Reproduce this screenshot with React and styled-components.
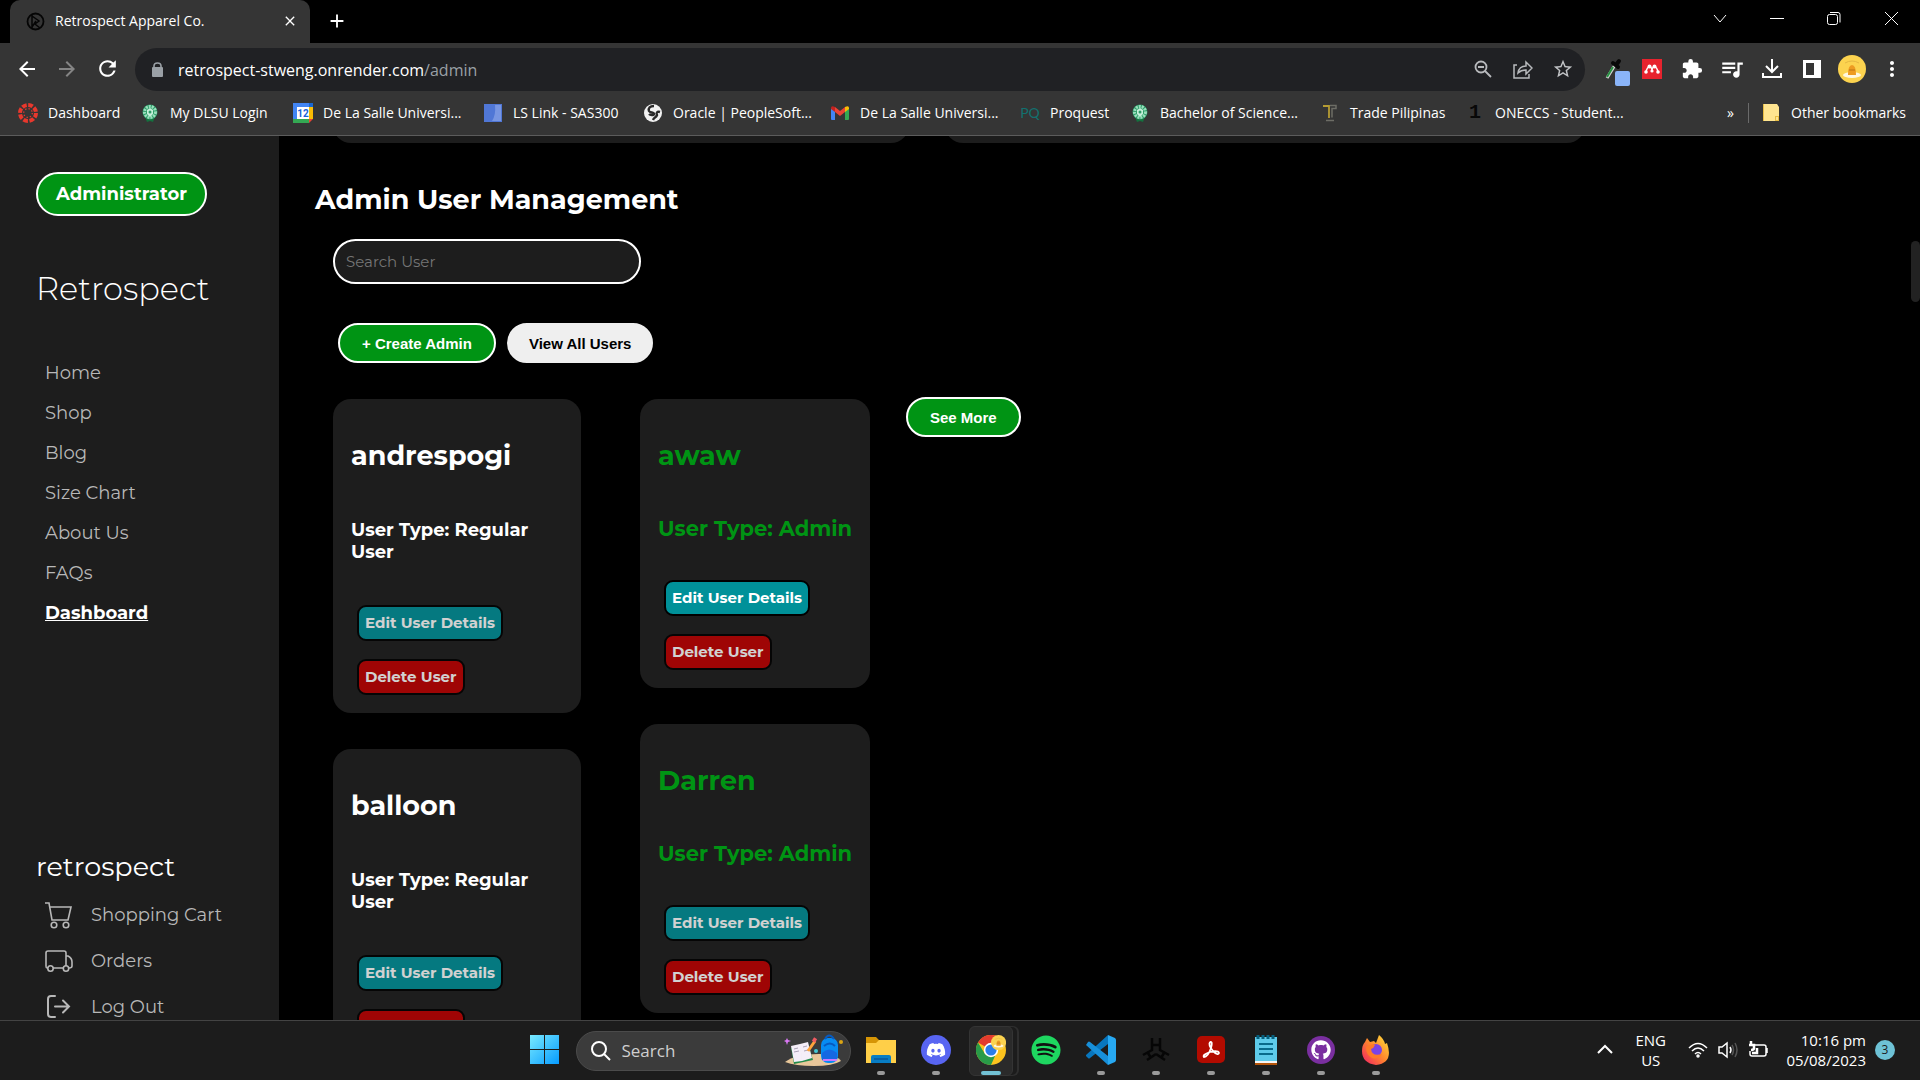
import React from "react";
import styled, { createGlobalStyle } from "styled-components";
import {
  MdArrowBack,
  MdArrowForward,
  MdRefresh,
  MdExtension,
  MdQueueMusic,
  MdMoreVert,
  MdStarOutline,
  MdAdd,
  MdClose,
} from "react-icons/md";
import { FaDiscord, FaSpotify, FaGithub } from "react-icons/fa6";

const brandFont = `Montserrat, Inter, "Open Sans", sans-serif`;
const systemFont = `"Segoe UI", "Open Sans", "Noto Sans", sans-serif`;

const GlobalStyle = createGlobalStyle`
  *, *::before, *::after { box-sizing: border-box; }
  body { margin: 0; background: #000; }
  button, input { font-family: inherit; margin: 0; }
  button { cursor: pointer; }
  a { color: inherit; text-decoration: none; }
  h1, h2, h3, h4, p, ul { margin: 0; padding: 0; }
  ul { list-style: none; }
  svg { display: block; flex: none; }
`;

const Desktop = styled.div`
  display: flex;
  flex-direction: column;
  height: 100vh;
  overflow: hidden;
  background: #000;
  color: #fff;
  font-family: ${systemFont};
`;

const IconButton = styled.button`
  display: flex;
  align-items: center;
  justify-content: center;
  width: ${(p) => p.$width || 40}px;
  height: ${(p) => p.$height || 40}px;
  padding: 0 0 2px;
  border: 0;
  background: none;
  color: ${(p) => p.$color || "#fff"};
`;

/* Browser frame */

const TabStrip = styled.header`
  display: flex;
  flex: none;
  height: 43px;
  padding: 0 1px 0 10px;
`;

const Tab = styled.div`
  display: flex;
  align-items: center;
  gap: 10px;
  width: 300px;
  padding: 0 10px 0 16px;
  border-radius: 10px 10px 0 0;
  background: #353535;
  font-size: 14px;
`;

const TabTitle = styled.span`
  flex: 1;
  padding-bottom: 2px;
  white-space: nowrap;
`;

const WindowControls = styled.div`
  display: flex;
  margin-left: auto;
`;

const Toolbar = styled.div`
  display: flex;
  flex: none;
  align-items: center;
  height: 53px;
  padding: 0 8px 0 7px;
  background: #353535;
`;

const AddressBar = styled.div`
  display: flex;
  flex: 1;
  align-items: center;
  height: 43px;
  margin: 0 7px 0 8px;
  padding: 0 2px 0 14px;
  border-radius: 22px;
  background: #202124;
  color: #9aa0a6;
`;

const AddressText = styled.span`
  flex: 1;
  margin-left: 12px;
  font-size: 16px;
  white-space: nowrap;
`;

const Host = styled.span`
  color: #fff;
`;

const BookmarksBar = styled.nav`
  display: flex;
  flex: none;
  align-items: center;
  height: 40px;
  padding: 0 14px 6px 18px;
  border-bottom: 1px solid #5c5c5c;
  background: #353535;
  font-size: 14px;
`;

const Bookmark = styled.a`
  display: flex;
  align-items: center;
  gap: 10px;
  width: ${(p) => (p.$width ? `${p.$width}px` : "auto")};
  white-space: nowrap;
`;

const BookmarksEnd = styled.div`
  display: flex;
  align-items: center;
  gap: 14px;
  margin-left: auto;
`;

const Divider = styled.span`
  width: 1px;
  height: 20px;
  background: #6b6b6b;
`;

/* Page */

const Page = styled.div`
  position: relative;
  display: flex;
  flex: 1;
  min-height: 0;
  overflow: hidden;
  font-family: ${brandFont};
`;

const ScrollThumb = styled.span`
  position: absolute;
  top: 105px;
  right: 0;
  width: 9px;
  height: 61px;
  border-radius: 5px;
  background: #222;
`;

const Sidebar = styled.aside`
  flex: none;
  width: 279px;
  padding: 36px;
  background: #1d1d1d;
`;

const RolePill = styled.button`
  width: 171px;
  height: 44px;
  padding: 0;
  border: 2px solid #fff;
  border-radius: 22px;
  background: #009414;
  color: #fff;
  font-size: 18px;
  font-weight: 700;
`;

const SiteName = styled.h1`
  margin-top: 54px;
  font-size: 32px;
  font-weight: 300;
  line-height: 38px;
`;

const NavList = styled.ul`
  margin-top: 45px;
  padding-left: 9px;
`;

const NavLink = styled.a`
  display: block;
  color: ${(p) => (p.$active ? "#fff" : "#b8b8b8")};
  font-size: 18px;
  font-weight: ${(p) => (p.$active ? 700 : 400)};
  line-height: 40px;
  text-decoration: ${(p) => (p.$active ? "underline" : "none")};
`;

const AccountName = styled.h2`
  margin-top: 218px;
  font-size: 27px;
  font-weight: 400;
  line-height: 32px;
`;

const AccountList = styled.ul`
  margin-top: 9px;
  padding-left: 9px;
`;

const AccountLink = styled.a`
  display: flex;
  align-items: center;
  gap: 18px;
  height: 46px;
  color: #b8b8b8;
  font-size: 18px;
`;

const Main = styled.main`
  flex: 1;
  min-width: 0;
  padding-left: 36px;
`;

const Section = styled.section`
  padding-left: 18px;
`;

const PanelRow = styled.div`
  display: flex;
  gap: 36px;
  height: 40px;
  margin: -33px 0 0 18px;
`;

const Panel = styled.div`
  width: ${(p) => p.$width}px;
  border-radius: 18px;
  background: #1d1d1d;
`;

const Heading = styled.h2`
  margin-top: 40px;
  font-size: 27px;
  font-weight: 700;
  line-height: 34px;
`;

const SearchBox = styled.input`
  display: block;
  width: 308px;
  height: 45px;
  margin-top: 22px;
  padding: 0 11px;
  border: 2px solid #fff;
  border-radius: 23px;
  background: #1d1d1d;
  color: #fff;
  font-size: 15px;
  &::placeholder { color: #757575; opacity: 1; }
`;

const Actions = styled.div`
  display: flex;
  gap: 11px;
  margin: 39px 0 34px;
  padding-left: 5px;
`;

const PillButton = styled.button`
  height: 40px;
  padding: 0 ${(p) => (p.$plain ? 20 : 22)}px;
  border: 2px solid ${(p) => (p.$plain ? "#efefef" : "#fff")};
  border-radius: 20px;
  background: ${(p) => (p.$plain ? "#efefef" : "#009414")};
  color: ${(p) => (p.$plain ? "#000" : "#fff")};
  font-family: Arial, "Liberation Sans", sans-serif;
  font-size: 15px;
  font-weight: 700;
  white-space: nowrap;
`;

const Board = styled.div`
  display: flex;
  align-items: flex-start;
`;

const Column = styled.div`
  display: flex;
  flex-direction: column;
  gap: 36px;
  width: ${(p) => p.$width}px;
  margin-right: ${(p) => p.$space}px;
  padding-top: 2px;
`;

const Card = styled.article`
  padding: 18px;
  border-radius: 18px;
  background: #1d1d1d;
  color: ${(p) => (p.$admin ? "#009414" : "#fff")};
`;

const UserName = styled.h3`
  margin-top: 22px;
  font-size: 27px;
  font-weight: 700;
  line-height: 34px;
`;

const UserType = styled.h4`
  margin: ${(p) => (p.$admin ? "42px 0 38px" : "46px 0 42px")};
  font-size: ${(p) => (p.$admin ? 21 : 18)}px;
  font-weight: 700;
  line-height: ${(p) => (p.$admin ? 27 : 22)}px;
  white-space: ${(p) => (p.$admin ? "nowrap" : "normal")};
`;

const CardActions = styled.div`
  display: flex;
  flex-direction: column;
  align-items: flex-start;
  gap: 18px;
  padding-left: 6px;
`;

const CardButton = styled.button`
  height: 36px;
  padding: 0 6px 2px;
  border: 2px solid #000;
  border-radius: 9px;
  background: ${(p) => (p.$danger ? "#c00000" : "#009199")};
  color: #fff;
  font-size: 15px;
  font-weight: 700;
  white-space: nowrap;
  opacity: ${(p) => (p.$hovered ? 1 : 0.8)};
`;

/* Taskbar */

const TaskbarRoot = styled.footer`
  display: grid;
  flex: none;
  grid-template-columns: 1fr auto 1fr;
  align-items: center;
  height: 60px;
  border-top: 1px solid #434343;
  background: #1c1c1c;
`;

const AppRow = styled.div`
  display: flex;
  grid-column: 2;
  align-items: center;
  gap: 11px;
`;

const TaskSearch = styled.label`
  display: flex;
  align-items: center;
  width: 275px;
  height: 40px;
  margin: 0 -3px 0 -2px;
  padding: 0 6px 0 14px;
  border: 1px solid #4b4b4b;
  border-radius: 20px;
  background: #3b3b3b;
`;

const TaskInput = styled.input`
  flex: 1;
  min-width: 0;
  margin-left: 11px;
  padding: 0;
  border: 0;
  background: none;
  color: #fff;
  font-size: 17px;
  &::placeholder { color: #cfcfcf; opacity: 1; }
`;

const AppButton = styled.button`
  position: relative;
  display: flex;
  align-items: center;
  justify-content: center;
  width: 44px;
  height: 50px;
  padding: 0 0 2px;
  border: 1px solid ${(p) => (p.$active ? "#343434" : "transparent")};
  border-radius: 6px;
  background: ${(p) => (p.$active ? "#2a2a2a" : "none")};
  box-shadow: ${(p) => (p.$active ? "5px 0 0 -1px #1c1c1c, 6px 0 0 0 #2e2e2e" : "none")};
`;

const Indicator = styled.span`
  position: absolute;
  bottom: 0;
  width: ${(p) => (p.$active ? 20 : 8)}px;
  height: 4px;
  border-radius: 2px;
  background: ${(p) => (p.$active ? "#72c1d4" : "#9a9a9a")};
`;

const Tray = styled.div`
  display: flex;
  align-items: center;
  justify-content: flex-end;
  padding: 0 25px 2px 0;
  font-size: 15px;
  line-height: 20px;
`;

const Language = styled.div`
  margin: 0 22px 0 20px;
  text-align: center;
`;

const StatusIcons = styled.div`
  display: flex;
  gap: 10px;
`;

const Clock = styled.time`
  min-width: 98px;
  text-align: right;
`;

const Count = styled.span`
  width: 20px;
  height: 20px;
  margin-left: 9px;
  border-radius: 10px;
  background: #6ec2d6;
  color: #1c1c1c;
  font-size: 12px;
  text-align: center;
`;

/* Drawings */

const Line = ({ size = 20, width = 2, children }) => (
  <svg width={size} height={size} viewBox="0 0 20 20" fill="none" stroke="currentColor" strokeWidth={width}>
    {children}
  </svg>
);

const SiteIcon = () => (
  <svg width="19" height="19" viewBox="0 0 19 19" fill="none" stroke="#050505">
    <circle cx="9.500" cy="9.500" r="8" strokeWidth="1.800" />
    <path d="M6 3v13M6 4l7 5-4 3 5 4M6 15l4-6" strokeWidth="1.500" />
  </svg>
);

const LockIcon = () => (
  <svg width="17" height="17" viewBox="0 0 17 17">
    <path d="M5 7V5q0-3 3.500-3T12 5v2" fill="none" stroke="currentColor" strokeWidth="1.600" />
    <rect x="3" y="6" width="11" height="10" rx="1" fill="currentColor" />
  </svg>
);

const CanvasIcon = () => (
  <svg width="20" height="20" viewBox="0 0 20 20">
    <circle cx="10" cy="10" r="8" fill="none" stroke="#e8382d" strokeWidth="4" strokeDasharray="4.700 1.583" />
    <circle cx="10" cy="10" r="4.300" fill="none" stroke="#e8382d" strokeWidth="1.300" strokeDasharray="1.300 2.077" />
  </svg>
);

const SealIcon = () => (
  <svg width="20" height="20" viewBox="0 0 20 20">
    <path d="M5 14l2 5 3-1 3 1 2-5z" fill="#15703f" />
    <circle cx="10" cy="9" r="7.500" fill="#2d9d68" />
    <circle cx="10" cy="9" r="5.500" fill="none" stroke="#9adfbd" strokeWidth="3" strokeDasharray="2 1" />
    <path d="M10 5l3 2v4l-3 3-3-3V7z" fill="#c5f0da" />
    <circle cx="10" cy="9" r="1.500" fill="#2d9d68" />
  </svg>
);

const CalendarIcon = () => (
  <svg width="20" height="20" viewBox="0 0 20 20">
    <path d="M0 0h16v4H4v12H0z" fill="#4285f4" />
    <path d="M16 0h4v4h-4z" fill="#1967d2" />
    <path d="M16 4h4v12h-4z" fill="#fbbc04" />
    <path d="M0 16h16v4H0z" fill="#34a853" />
    <path d="M16 16h4l-4 4z" fill="#ea4335" />
    <path d="M4 4h12v12H4z" fill="#fff" />
    <text x="10" y="14" textAnchor="middle" fontSize="10" fontWeight="700" fill="#1a63d8" fontFamily="Roboto, sans-serif">12</text>
  </svg>
);

const BlueIcon = () => (
  <svg width="20" height="20" viewBox="0 0 20 20">
    <path d="M1 1h18v18H1z" fill="#5077d6" />
    <path d="M12 2h6v16H9q4-6 3-16" fill="#7896e2" />
  </svg>
);

const GlobeIcon = () => (
  <svg width="20" height="20" viewBox="0 0 20 20">
    <circle cx="10" cy="10" r="9" fill="#f3f3f3" />
    <path d="M11 3C7 3 5 5 6 8c1 2 5 1 5 3s-4 1-5 0M17 9c-3-1-4 1-3 3-1 3-3 2-4 5" fill="none" stroke="#2a2a2a" strokeWidth="2.400" />
  </svg>
);

const GmailIcon = () => (
  <svg width="20" height="20" viewBox="0 0 20 20">
    <path d="M1 5l4 3v9H2q-1 0-1-1z" fill="#4285f4" />
    <path d="M15 8l4-3v11q0 1-1 1h-3z" fill="#34a853" />
    <path d="M5 4l5 4 5-4v5l-5 4-5-4z" fill="#ea4335" />
    <path d="M1 5q0-3 4-1v5L1 6z" fill="#c5221f" />
    <path d="M19 5q0-3-4-1v5l4-3z" fill="#fbbc04" />
  </svg>
);

const Mark = styled.span`
  width: 20px;
  color: ${(p) => p.$color};
  font-family: ${(p) => (p.$serif ? `"Liberation Mono", monospace` : `Lato, sans-serif`)};
  font-size: ${(p) => (p.$serif ? 20 : 14)}px;
  font-weight: ${(p) => (p.$serif ? 700 : 400)};
  line-height: 20px;
  text-align: center;
`;

const TradeIcon = () => (
  <svg width="20" height="20" viewBox="0 0 20 20" fill="none">
    <path d="M3 3h6v12" stroke="#b59c33" strokeWidth="1.800" />
    <path d="M10 2.500h6v3h-4v9M6 17.500h8" stroke="#6d6d66" strokeWidth="1.500" />
  </svg>
);

const FolderIcon = () => (
  <svg width="18" height="20" viewBox="0 0 18 20">
    <path d="M0 1h14l2 3v14H0z" fill="#ffe590" />
    <path d="M0 1h1v17H0zM12 13h4v5h-4z" fill="#e8bd45" />
    <path d="M13 14h2v3h-2z" fill="#ffe590" />
  </svg>
);

const DropperIcon = () => (
  <svg width="36" height="34" viewBox="0 0 36 34" fill="none">
    <path d="M13 26l8-13" stroke="#d5d5d5" strokeWidth="3" />
    <path d="M13 25l6-10" stroke="#279242" strokeWidth="2" />
    <path d="M19 11l5 4M22 13l3-4" stroke="#080808" strokeWidth="4" strokeLinecap="round" />
    <rect x="21" y="19" width="15" height="15" rx="2" fill="#8ab4f8" />
  </svg>
);

const MendeleyIcon = () => (
  <svg width="20" height="20" viewBox="0 0 20 20">
    <path d="M0 0h20v20H0z" fill="#e7232e" />
    <circle cx="7.500" cy="7.500" r="2" fill="#fff" />
    <circle cx="12.500" cy="7.500" r="2" fill="#fff" />
    <circle cx="4" cy="13" r="1.800" fill="#fff" />
    <circle cx="10" cy="12" r="1.600" fill="#fff" />
    <circle cx="16" cy="13" r="1.800" fill="#fff" />
    <path d="M4 13q1-5 3.500-5T10 12q0-4 2.500-4t3.500 5" fill="none" stroke="#fff" strokeWidth="1.500" />
  </svg>
);

const DuckShape = () => (
  <>
    <circle cx="14" cy="14" r="14" fill="#fcd34f" />
    <path d="M7 8q7-4 14 0" fill="none" stroke="#e5b843" />
    <ellipse cx="14" cy="20" rx="9" ry="3" fill="#fff7df" />
    <path d="M10 20q0-10 4-10t4 10z" fill="#ee9b21" />
    <path d="M11 15h6" stroke="#bb7417" />
  </>
);

const CartIcon = () => (
  <svg width="28" height="28" viewBox="0 0 28 28" fill="none" stroke="currentColor" strokeWidth="1.600">
    <path d="M0 2h4l3 17h16l3-13H5" />
    <circle cx="9" cy="24" r="2.800" />
    <circle cx="21" cy="24" r="2.800" />
  </svg>
);

const TruckIcon = () => (
  <svg width="28" height="28" viewBox="0 0 28 28" fill="none" stroke="currentColor" strokeWidth="1.600">
    <path d="M3 21H2q-1 0-1-2V6q0-2 2-2h16q2 0 2 2v13M8 21h10M21 9h2q4 2 4 6v4q0 2-3 2" />
    <circle cx="5.500" cy="21.500" r="2.700" />
    <circle cx="21" cy="21.500" r="2.700" />
  </svg>
);

const ExitIcon = () => (
  <svg width="28" height="28" viewBox="0 0 28 28" fill="none" stroke="currentColor" strokeWidth="2" strokeLinecap="round">
    <path d="M10 3H6Q3 3 3 6v15q0 3 3 3h4M10 13.500h14M18 7.500l6 6-6 6" />
  </svg>
);

const WindowsIcon = () => (
  <svg width="29" height="29" viewBox="0 0 29 29">
    <defs>
      <linearGradient id="win" x1="0" y1="0" x2="1" y2="1" gradientUnits="objectBoundingBox">
        <stop stopColor="#79eaff" />
        <stop offset="1" stopColor="#069bff" />
      </linearGradient>
    </defs>
    <path d="M0 0h14v14H0zM15 0h14v14H15zM0 15h14v14H0zM15 15h14v14H15z" fill="url(#win)" />
  </svg>
);

const SchoolIcon = () => (
  <svg width="60" height="34" viewBox="0 0 60 34">
    <path d="M1 28q10-8 34-8 18 1 22 7-8 5-27 5T1 28" fill="#e8c79a" />
    <path d="M7 14l17-4 5 16-19 4z" fill="#238c4b" />
    <path d="M7 12l9-2 2 17-8 1zM16 10l8-2 4 16-10 3z" fill="#f5eef9" />
    <path d="M10 15l4-1M10 18l5-1M19 13l4-1M20 17l4-1" stroke="#aca2b8" />
    <path d="M24 17l7-10" stroke="#ffa43b" strokeWidth="3" />
    <path d="M29 5l3 2" stroke="#f15b62" strokeWidth="4" />
    <rect x="37" y="4" width="17" height="25" rx="7" fill="#078bf2" />
    <path d="M41 5q4-7 9 0M40 12q6-5 11 0" fill="none" stroke="#075ac0" strokeWidth="2" />
    <path d="M38 19q7-7 15 0v7H38z" fill="#1668e2" />
    <path d="M39 26h14" stroke="#c977ff" strokeWidth="2" />
    <path d="M3 4l1 2 3 1-3 1-1 3-1-3-2-1 2-1z" fill="#db78f5" />
    <circle cx="57" cy="8" r="2" fill="#dba514" />
    <circle cx="32" cy="17" r="2" fill="#43c7d3" />
  </svg>
);

const ExplorerIcon = () => (
  <svg width="30" height="30" viewBox="0 0 30 30">
    <path d="M0 2h10l3 3h16v10H0z" fill="#d69505" />
    <path d="M0 8h10l3-3h17v23H0z" fill="#ffcf48" />
    <path d="M5 28v-6q0-2 2-2h16q2 0 2 2v6z" fill="#087dc4" />
    <path d="M8 24h14" stroke="#07569b" strokeWidth="1.500" />
  </svg>
);

const DiscordIcon = () => (
  <svg width="30" height="30" viewBox="0 0 30 30">
    <circle cx="15" cy="15" r="15" fill="#5865f2" />
    <FaDiscord x="5" y="5" size={20} color="#fff" />
  </svg>
);

const ChromeIcon = () => (
  <svg width="30" height="30" viewBox="0 0 30 30">
    <circle cx="15" cy="15" r="15" fill="#fcc31e" />
    <path d="M15 15L2 7.500A15 15 0 0 1 28 7.500z" fill="#e33b2e" />
    <path d="M2 7.500L9 19l10 2-4 9A15 15 0 0 1 2 7.500" fill="#299b48" />
    <circle cx="15" cy="15" r="7.200" fill="#fff" />
    <circle cx="15" cy="15" r="5.600" fill="#2b7de9" />
    <g transform="translate(15 0) scale(.54)">
      <DuckShape />
    </g>
  </svg>
);

const SpotifyIcon = () => (
  <svg width="30" height="30" viewBox="0 0 30 30">
    <circle cx="15" cy="15" r="13" fill="#111" />
    <FaSpotify size={30} color="#1ed760" />
  </svg>
);

const CodeIcon = () => (
  <svg width="30" height="30" viewBox="0 0 30 30">
    <path d="M0 20L22 0v9L4 23q-1 1-2 0l-2-2z" fill="#0876bd" />
    <path d="M0 10l2-3q1-1 2 0l18 14v9z" fill="#178fd9" />
    <path d="M22 0l7 3q1 1 1 2v20q0 1-1 2l-7 3z" fill="#27a9f2" />
  </svg>
);

const TripodIcon = () => (
  <svg width="28" height="28" viewBox="0 0 28 28" fill="none" stroke="#060606" strokeWidth="2.500">
    <path d="M10 2v12L1 19M18 2v12l9 5M10 9h8M14 18l-9 6M14 18l9 6M6 17l3 5M22 17l-3 5" />
  </svg>
);

const AcrobatIcon = () => (
  <svg width="28" height="28" viewBox="0 0 28 28">
    <rect width="28" height="27" rx="5" fill="#b30b00" />
    <path d="M13 6q3-1 1 6-3 9-7 9-2-2 6-5 8-2 9 1-1 3-6-2-5-6-3-9" fill="none" stroke="#fff" strokeWidth="1.800" />
  </svg>
);

const NotepadIcon = () => (
  <svg width="24" height="30" viewBox="0 0 24 30">
    <path d="M1 2h22v26H1z" fill="#5ecbea" />
    <path d="M1 26h22v2H1z" fill="#f5f5f5" />
    <path d="M1 28h22v2H1z" fill="#b4550b" />
    <path d="M4 0v4M9 0v4M14 0v4M19 0v4" stroke="#07607e" strokeWidth="3" />
    <path d="M5 9h14M5 14h14M5 19h14" stroke="#096b8b" strokeWidth="2" />
  </svg>
);

const GithubIcon = () => (
  <svg width="28" height="28" viewBox="0 0 28 28">
    <circle cx="14" cy="14" r="14" fill="#7a2fa0" />
    <FaGithub x="4" y="4" size={20} color="#fff" />
  </svg>
);

const FirefoxIcon = () => (
  <svg width="28" height="30" viewBox="0 0 28 30">
    <defs>
      <linearGradient id="fox" x1="1" y1="0" x2="0" y2="1">
        <stop stopColor="#ffe83b" />
        <stop offset=".5" stopColor="#ff852d" />
        <stop offset="1" stopColor="#f11968" />
      </linearGradient>
    </defs>
    <path d="M3 7l2-4 3 4 4-1 2 2 3-8q5 4 6 9l2-1q7 20-11 22Q0 28 0 16q0-6 3-9" fill="url(#fox)" />
    <circle cx="14" cy="15" r="6" fill="#7a43e5" />
    <path d="M4 12q6-4 9-2-1 3-4 4 1 8 11 5-4 6-10 4-6-3-6-11" fill="#ff7a28" />
  </svg>
);

const bookmarks = [
  { label: "Dashboard", width: 122, icon: <CanvasIcon /> },
  { label: "My DLSU Login", width: 153, icon: <SealIcon /> },
  { label: "De La Salle Universi...", width: 190, icon: <CalendarIcon /> },
  { label: "LS Link - SAS300", width: 160, icon: <BlueIcon /> },
  { label: "Oracle | PeopleSoft...", width: 187, icon: <GlobeIcon /> },
  { label: "De La Salle Universi...", width: 190, icon: <GmailIcon /> },
  { label: "Proquest", width: 110, icon: <Mark $color="#12716f">PQ</Mark> },
  { label: "Bachelor of Science...", width: 190, icon: <SealIcon /> },
  { label: "Trade Pilipinas", width: 145, icon: <TradeIcon /> },
  { label: "ONECCS - Student...", width: 165, icon: <Mark $color="#080808" $serif>1</Mark> },
];

const navItems = ["Home", "Shop", "Blog", "Size Chart", "About Us", "FAQs", "Dashboard"];

const accountItems = [
  { label: "Shopping Cart", icon: <CartIcon /> },
  { label: "Orders", icon: <TruckIcon /> },
  { label: "Log Out", icon: <ExitIcon /> },
];

const regularUsers = ["andrespogi", "balloon"];
const adminUsers = ["awaw", "Darren"];

const apps = [
  { name: "File Explorer", icon: <ExplorerIcon />, open: true },
  { name: "Discord", icon: <DiscordIcon />, open: true },
  { name: "Chrome", icon: <ChromeIcon />, open: true, active: true },
  { name: "Spotify", icon: <SpotifyIcon /> },
  { name: "Visual Studio Code", icon: <CodeIcon />, open: true },
  { name: "Tripod", icon: <TripodIcon />, open: true },
  { name: "Acrobat", icon: <AcrobatIcon />, open: true },
  { name: "Notepad", icon: <NotepadIcon />, open: true },
  { name: "GitHub Desktop", icon: <GithubIcon />, open: true },
  { name: "Firefox", icon: <FirefoxIcon />, open: true },
];

function UserCard({ name, admin, hovered }) {
  return (
    <Card $admin={admin}>
      <UserName>{name}</UserName>
      <UserType $admin={admin}>{admin ? "User Type: Admin" : "User Type: Regular User"}</UserType>
      <CardActions>
        <CardButton $hovered={hovered}>Edit User Details</CardButton>
        <CardButton $danger>Delete User</CardButton>
      </CardActions>
    </Card>
  );
}

function BrowserFrame() {
  return (
    <>
      <TabStrip>
        <Tab>
          <SiteIcon />
          <TabTitle>Retrospect Apparel Co.</TabTitle>
          <IconButton $width={20} $height={20} aria-label="Close tab"><MdClose size={16} /></IconButton>
        </Tab>
        <IconButton $width={54} $height={43} aria-label="New tab"><MdAdd size={22} /></IconButton>
        <WindowControls>
          <IconButton $width={57} aria-label="Search tabs"><Line width={1}><path d="M4 6l6 7 6-7" /></Line></IconButton>
          <IconButton $width={57} aria-label="Minimize"><Line width={1}><path d="M3 9.500h14" /></Line></IconButton>
          <IconButton $width={57} aria-label="Restore">
            <Line width={1}><rect x="3.500" y="5.500" width="10" height="10" rx="2" /><path d="M6 3.500h8q2 0 2 2v8" /></Line>
          </IconButton>
          <IconButton $width={57} aria-label="Close"><Line width={1}><path d="M4 3l13 13M17 3L4 16" /></Line></IconButton>
        </WindowControls>
      </TabStrip>
      <Toolbar>
        <IconButton aria-label="Back"><MdArrowBack size={24} /></IconButton>
        <IconButton aria-label="Forward" $color="#858585"><MdArrowForward size={24} /></IconButton>
        <IconButton aria-label="Reload"><MdRefresh size={25} /></IconButton>
        <AddressBar>
          <LockIcon />
          <AddressText><Host>retrospect-stweng.onrender.com</Host>/admin</AddressText>
          <IconButton aria-label="Zoom" $color="#b8babd">
            <Line width={1.8}><circle cx="8" cy="8" r="5.500" /><path d="M12 12l6 6M5 8h6" /></Line>
          </IconButton>
          <IconButton aria-label="Share" $color="#b8babd">
            <Line width={1.5}><path d="M4 6H1v13h15v-4M5 14q1-7 8-7V3l6 6-6 6v-4q-5 0-8 3z" /></Line>
          </IconButton>
          <IconButton aria-label="Bookmark this page" $color="#c2c4c7"><MdStarOutline size={22} /></IconButton>
        </AddressBar>
        <IconButton aria-label="Color picker"><DropperIcon /></IconButton>
        <IconButton aria-label="Mendeley"><MendeleyIcon /></IconButton>
        <IconButton aria-label="Extensions"><MdExtension size={22} /></IconButton>
        <IconButton aria-label="Media"><MdQueueMusic size={26} /></IconButton>
        <IconButton aria-label="Downloads">
          <Line><path d="M10 0v12M4 7l6 6 6-6M1 14v4h18v-4" /></Line>
        </IconButton>
        <IconButton aria-label="Side panel">
          <svg width="18" height="18" viewBox="0 0 18 18" fill="#fff"><path d="M0 0h18v18H0zM3 3v12h8V3z" fillRule="evenodd" /></svg>
        </IconButton>
        <IconButton aria-label="Profile">
          <svg width="28" height="28" viewBox="0 0 28 28"><DuckShape /></svg>
        </IconButton>
        <IconButton aria-label="Menu"><MdMoreVert size={24} /></IconButton>
      </Toolbar>
      <BookmarksBar>
        {bookmarks.map((b, i) => (
          <Bookmark key={i} href="#" $width={b.width}>{b.icon}<span>{b.label}</span></Bookmark>
        ))}
        <BookmarksEnd>
          <span>»</span>
          <Divider />
          <Bookmark href="#"><FolderIcon /><span>Other bookmarks</span></Bookmark>
        </BookmarksEnd>
      </BookmarksBar>
    </>
  );
}

function Taskbar() {
  return (
    <TaskbarRoot>
      <AppRow>
        <IconButton $width={44} $height={50} aria-label="Start"><WindowsIcon /></IconButton>
        <TaskSearch>
          <Line><circle cx="8" cy="8" r="7" /><path d="M13 13l6 6" /></Line>
          <TaskInput placeholder="Search" aria-label="Search" />
          <SchoolIcon />
        </TaskSearch>
        {apps.map((a) => (
          <AppButton key={a.name} $active={a.active} aria-label={a.name}>
            {a.icon}
            {a.open && <Indicator $active={a.active} />}
          </AppButton>
        ))}
      </AppRow>
      <Tray>
        <Line width={2}><path d="M3 13l7-7 7 7" /></Line>
        <Language>ENG<br />US</Language>
        <StatusIcons>
          <Line width={1.5}>
            <path d="M1 8q9-9 18 0M4 11q6-6 12 0M7 14q3-3 6 0" />
            <circle cx="10" cy="16" r="1" />
          </Line>
          <Line width={1.5}>
            <path d="M1 7v6h3l5 4V3L4 7zM12 7q2 3 0 6" />
            <path d="M14 5q3 5 0 10M17 3q4 7 0 14" stroke="#555" />
          </Line>
          <Line width={1.5}>
            <path d="M7 5h9q2 0 2 2v7q0 2-2 2H4q-2 0-2-2v-3M19 8v5" />
            <path d="M3 1v4M1 5h5v3q0 2-3 2M4 13h5V8" strokeWidth="2.500" />
          </Line>
        </StatusIcons>
        <Clock>10:16 pm<br />05/08/2023</Clock>
        <Count>3</Count>
      </Tray>
    </TaskbarRoot>
  );
}

export default function App() {
  return (
    <Desktop>
      <GlobalStyle />
      <BrowserFrame />
      <Page>
        <Sidebar>
          <RolePill>Administrator</RolePill>
          <SiteName>Retrospect</SiteName>
          <NavList>
            {navItems.map((item) => (
              <li key={item}><NavLink href="#" $active={item === "Dashboard"}>{item}</NavLink></li>
            ))}
          </NavList>
          <AccountName>retrospect</AccountName>
          <AccountList>
            {accountItems.map((item) => (
              <li key={item.label}><AccountLink href="#">{item.icon}{item.label}</AccountLink></li>
            ))}
          </AccountList>
        </Sidebar>
        <Main>
          <PanelRow>
            <Panel $width={576} />
            <Panel $width={640} />
          </PanelRow>
          <Heading>Admin User Management</Heading>
          <Section>
            <SearchBox type="search" placeholder="Search User" aria-label="Search User" />
            <Actions>
              <PillButton>+ Create Admin</PillButton>
              <PillButton $plain>View All Users</PillButton>
            </Actions>
            <Board>
              <Column $width={248} $space={59}>
                {regularUsers.map((name) => <UserCard key={name} name={name} />)}
              </Column>
              <Column $width={230} $space={36}>
                {adminUsers.map((name) => <UserCard key={name} name={name} admin hovered={name === "awaw"} />)}
              </Column>
              <PillButton>See More</PillButton>
            </Board>
          </Section>
        </Main>
        <ScrollThumb />
      </Page>
      <Taskbar />
    </Desktop>
  );
}
